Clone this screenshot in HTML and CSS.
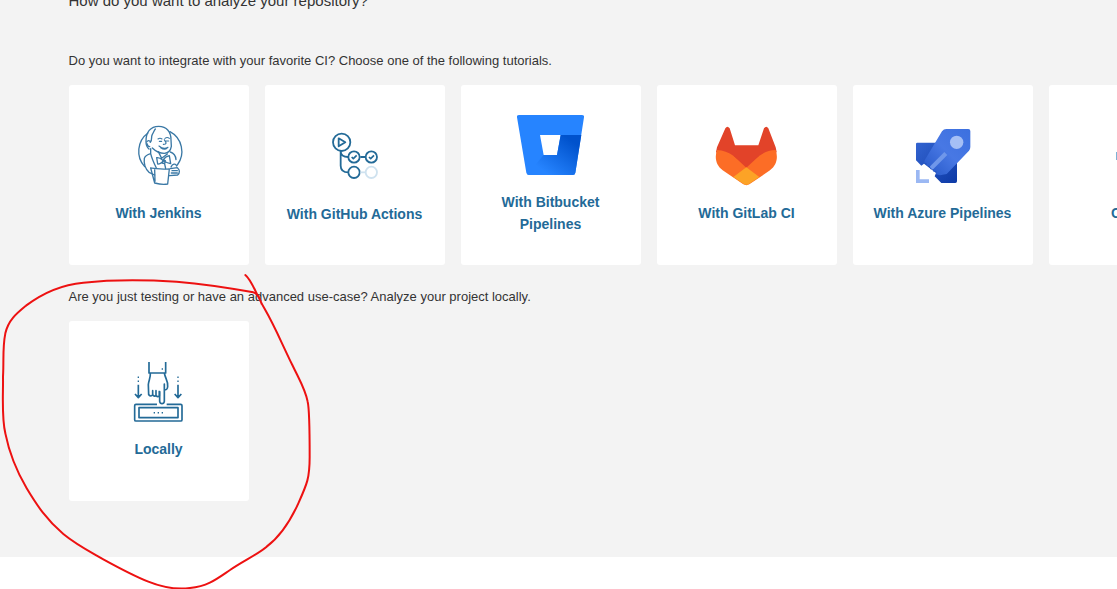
FILE: index.html
```
<!DOCTYPE html>
<html lang="en">
<head>
<meta charset="utf-8">
<title>Analyze your repository</title>
<link rel="stylesheet" href="styles.css">
</head>
<body>
<main class="page">
  <h1 class="title">How do you want to analyze your repository?</h1>
  <p class="prompt">Do you want to integrate with your favorite CI? Choose one of the following tutorials.</p>
  <div class="cards">
    <a class="card">
      <svg class="icon" viewBox="117 105 84 97"><g transform="translate(130 118) scale(.33333)" fill="none" stroke="#3a78a5" stroke-width="4" stroke-linecap="round" stroke-linejoin="round">
        <path d="M54 45A65 67 0 0 0 44 146M120 41A66 67 0 0 1 142 141"/>
        <path d="M57 93C50 87 48 80 48 71 47 42 62 25 86 25c25 0 37 18 37 40l1 20c-2 13-9 20-21 21-14 0-27-7-36-16"/>
        <path d="M50 72c4-6 10-5 11 1 7-7 1-16 6-24 4-6 5-11 9-16M51 77c1 6 4 9 8 9"/>
        <path d="M84 63c4-3 8-3 12 0M105 61c4-3 9-3 13 0M88 70h7M108 69h8M103 65c3 6 8 10 3 13l-6 1M87 84c9 8 19 9 27 4M92 89c7 5 14 6 19 2" stroke-width="3.4"/>
        <path d="M62 92v15c-10 3-17 7-19 14-2 15 3 31 14 42l17 8M62 107c4 17 10 29 17 43M121 102c10 3 16 10 17 23"/>
        <path d="M80 119c8-2 13 3 19 8 4-7 11-12 19-14l4 24c-9-2-15-5-21-8-7 6-13 10-18 9zM99 126l7 2-2 9-8-2zM104 138l3 14M85 101l10 20 17-13"/>
        <path d="M62 150c20 2 38 4 56 3l-5 45c-15 3-28 0-39-3zM74 155l1 35M121 152l21-3c8 6 8 16 1 22l-24 2M123 147c4-10 14-12 17-3M126 158h16M124 165h18"/>
      </g></svg>
      <span class="label">With Jenkins</span>
    </a>
    <a class="card">
      <svg class="icon icon-actions" viewBox="313 105 84 98"><g transform="translate(325 125) scale(.33333)" fill="none" stroke="#236a97" stroke-width="5.4" stroke-linejoin="round">
        <circle cx="50" cy="52" r="26"/><path d="M41 40v24l20-12zM47 78v44c0 14 7 20 23 20M47 80c1 11 8 16 22 16M106 96h14"/>
        <circle cx="87" cy="96" r="17"/><circle cx="139" cy="96" r="17"/><circle cx="87" cy="142" r="17"/>
        <path d="M80 96l5 5 10-10M132 96l5 5 10-10" stroke-width="5"/>
        <circle cx="139" cy="142" r="17" stroke="#cfe2ef"/><path d="M106 142h14" stroke="#cfe2ef"/>
      </g></svg>
      <span class="label">With GitHub Actions</span>
    </a>
    <a class="card">
      <svg class="icon icon-bitbucket" viewBox="509 105 84 86"><defs><linearGradient id="bucket" x1="1" y1=".1" x2=".25" y2=".85"><stop offset=".15" stop-color="#0052cc"/><stop offset="1" stop-color="#2684ff"/></linearGradient></defs><g transform="translate(510 105) scale(.33333)">
        <path fill="#2684ff" d="M27 30H216q7 0 6 7L196 203q-1 7-8 7H58q-8 0-9-7L21 37q-1-7 6-7zM90 90l11 60h40l11-60z" fill-rule="evenodd"/>
        <path fill="url(#bucket)" d="M152 90h62l-18 113q-1 7-8 7H58q-4 0-6-3l49-57h40z"/>
      </g></svg>
      <span class="label">With Bitbucket Pipelines</span>
    </a>
    <a class="card">
      <svg class="icon" viewBox="705 105 84 97"><g transform="translate(706 118) scale(.33333)">
        <path fill="#e24329" d="M58 31q6-9 13 0L87 82h70l17-51q7-9 13 0l22 57 3 14-91 99-91-99 3-14z"/>
        <path fill="#fc6d26" d="M33 96c18 0 35 7 50 18l38 29 38-29c15-11 32-18 50-18 8 23 3 46-17 61l-62 42q-9 5-18 0l-62-42C30 142 25 119 33 96z"/>
        <path fill="#e24329" d="M83 114h76l-38 35z"/>
        <path fill="#fca326" d="M121 148l39 29-30 20q-9 7-18 0l-30-20z"/>
      </g></svg>
      <span class="label">With GitLab CI</span>
    </a>
    <a class="card">
      <svg class="icon" viewBox="901 105 84 97"><defs><linearGradient id="wing" x1="0" y1="0" x2="1" y2="1"><stop stop-color="#3263d0"/><stop offset="1" stop-color="#0d3aa6"/></linearGradient><linearGradient id="rocket" x1="1" y1="0" x2="0" y2="1"><stop stop-color="#3c70df"/><stop offset=".5" stop-color="#4878e4"/><stop offset="1" stop-color="#2456c6"/></linearGradient></defs><g transform="translate(906 120) scale(.33333)">
        <path fill="url(#wing)" d="M34 68h64l55 55v61q0 5-5 5h-42l-20-20 4-10-36-28-8 6-16-16V72q0-4 4-4z"/>
        <path fill="url(#rocket)" d="M117 27h70q6 0 6 6v48q0 6-4 11l-67 70-20 4-12-3 1-9-9 1v-8l-9 1-1-9-9-2-2-8-6-1 1-7 52-87q5-7 13-7z"/>
        <circle cx="152" cy="67" r="20" fill="#a5bff5"/>
        <path fill="#6f97ea" d="M115 96l9 9-44 44-9-9z"/>
        <path fill="#9bb8f3" d="M30 150h11v28h28v11H30z"/>
      </g></svg>
      <span class="label">With Azure Pipelines</span>
    </a>
    <a class="card">
      <svg class="icon" viewBox="1097 105 84 97"><path fill="#7db2d6" d="M1116 152h8v8h-8zM1135 152h8v8h-8zM1154 152h8v8h-8z"/></svg>
      <span class="label">Other CI</span>
    </a>
  </div>
  <p class="prompt">Are you just testing or have an advanced use-case? Analyze your project locally.</p>
  <div class="cards">
    <a class="card">
      <svg class="icon" viewBox="117 341 84 97"><g transform="translate(124 352) scale(.33333)" fill="none" stroke="#236a97" stroke-width="5" stroke-linejoin="round">
        <path d="M75 30v33h50V30M79 63c1 16-5 22-6 35l1 30q7 8 12 0v-12 12q6 8 10 2v-14 15q6 6 10 0v-15"/>
        <path d="M121 63c3 18 12 23 10 41-1 8-3 10-10 10V96v52q-1 7-7 7t-7-7v-30"/>
        <path d="M99 157H36q-4 0-4 4v42q0 4 4 4h134q4 0 4-4v-42q0-4-4-4h-42M45 167h117v30H45zM43 98v38M33 126l10 11 10-11M162 98v38M152 126l10 11 10-11"/>
        <path d="M41 76h4M41 88h4M160 76h4M160 88h4M113 51h4M89 182h4M101 182h4M113 182h4" stroke-width="4.6"/>
      </g></svg>
      <span class="label">Locally</span>
    </a>
  </div>
</main>
<svg class="marker" viewBox="0 0 990 987"><path d="M736 45C755 60 765 95 793 145C825 200 845 250 877 315C900 363 916 388 923 425C929 450 929 505 929 590C929 655 921 672 895 730C870 785 840 830 800 860C775 882 725 905 690 930C650 957 625 978 570 984C540 988 500 987 445 965C400 947 350 920 310 898C270 875 230 855 190 822C140 780 110 735 80 685C45 625 27 575 16 520C4 470 10 400 9 350C12 300 7 265 16 220C25 180 50 160 78 137C120 105 175 75 250 68C340 58 450 60 530 65C615 72 690 84 760 97C770 100 776 105 785 132"/></svg>
</body>
</html>
```
FILE: styles.css
```
body {
  margin: 0;
  height: 589px;
  overflow: hidden;
  background: #fff;
  color: #333;
  font-family: "Liberation Sans", Arial, sans-serif;
}

.page {
  box-sizing: border-box;
  height: 557px;
  padding-left: 69px;
  overflow: hidden;
  background: #f3f3f3;
}

.title {
  margin: -11px 0 38px -.5px;
  font-size: 15px;
  font-weight: 400;
  line-height: 24px;
}

.prompt {
  margin: 0 0 15px -.5px;
  font-size: 13px;
  line-height: 19px;
}

.cards {
  display: flex;
  gap: 16px;
  margin-bottom: 22px;
}

.card {
  box-sizing: border-box;
  display: flex;
  flex: 0 0 180px;
  flex-direction: column;
  align-items: center;
  height: 180px;
  padding: 20px 16px 0;
  border-radius: 3px;
  background: #fff;
}

.icon {
  flex: none;
  width: 84px;
  height: 97px;
}

.icon-actions {
  height: 98px;
}

.icon-bitbucket {
  height: 86px;
}

.label {
  margin-right: 1px;
  color: #236a97;
  font-size: 14px;
  font-weight: 700;
  line-height: 22px;
  text-align: center;
}

/* Hand-drawn ring laid over the local analysis option */
.marker {
  position: absolute;
  top: 260px;
  left: 0;
  width: 330px;
  height: 329px;
  fill: none;
  stroke: #ed1111;
  stroke-width: 6;
  stroke-linecap: round;
  pointer-events: none;
}
```
